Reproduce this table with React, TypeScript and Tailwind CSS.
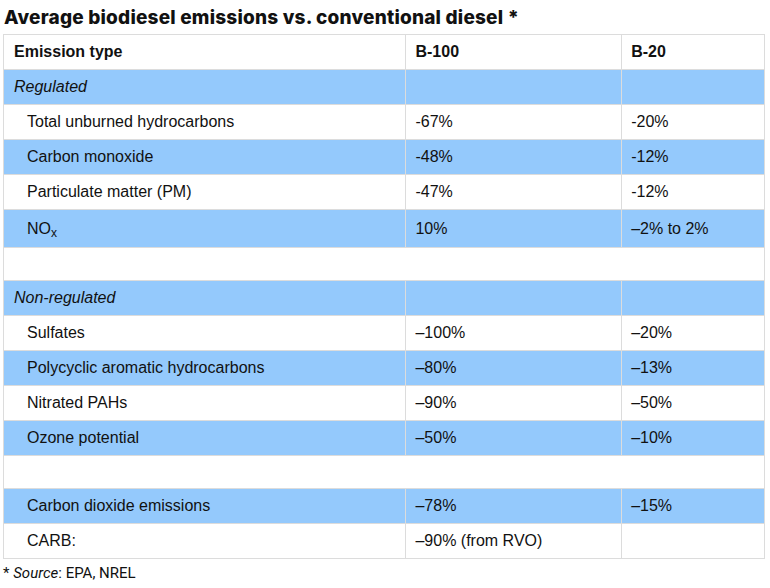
const ROWS: { label: React.ReactNode; b100?: string; b20?: string; kind: 'group' | 'item' | 'spacer'; blue?: boolean; tall?: boolean }[] = [
  { label: 'Regulated', kind: 'group', blue: true },
  { label: 'Total unburned hydrocarbons', b100: '-67%', b20: '-20%', kind: 'item' },
  { label: 'Carbon monoxide', b100: '-48%', b20: '-12%', kind: 'item', blue: true },
  { label: 'Particulate matter (PM)', b100: '-47%', b20: '-12%', kind: 'item' },
  {
    label: (
      <>
        NO<sub className="text-[12px]">x</sub>
      </>
    ),
    b100: '10%',
    b20: '–2% to 2%',
    kind: 'item',
    blue: true,
    tall: true,
  },
  { label: '', kind: 'spacer' },
  { label: 'Non-regulated', kind: 'group', blue: true },
  { label: 'Sulfates', b100: '–100%', b20: '–20%', kind: 'item' },
  { label: 'Polycyclic aromatic hydrocarbons', b100: '–80%', b20: '–13%', kind: 'item', blue: true },
  { label: 'Nitrated PAHs', b100: '–90%', b20: '–50%', kind: 'item' },
  { label: 'Ozone potential', b100: '–50%', b20: '–10%', kind: 'item', blue: true },
  { label: '', kind: 'spacer' },
  { label: 'Carbon dioxide emissions', b100: '–78%', b20: '–15%', kind: 'item', blue: true },
  { label: 'CARB:', b100: '–90% (from RVO)', b20: '', kind: 'item' },
]

export default function App() {
  return (
    <div className="w-[770px] h-[588px] bg-white px-[3px] pt-[5px]">
      <h1 className="text-[19px] leading-[25px] font-extrabold text-[#111] tracking-[0.2px] pl-[1px] [font-family:Inter,sans-serif]">
        Average biodiesel emissions vs. conventional diesel *
      </h1>
      <table className="mt-[4px] w-[762px] border-collapse text-[16px] leading-[20px] text-[#111] [font-family:'Liberation_Sans',Arial,sans-serif]">
        <colgroup>
          <col className="w-[403px]" />
          <col className="w-[216px]" />
          <col className="w-[143px]" />
        </colgroup>
        <thead>
          <tr className="h-[35px]">
            <th className="border border-[#dcdcdc] text-left font-bold pl-[10px]">Emission type</th>
            <th className="border border-[#dcdcdc] text-left font-bold pl-[9px]">B-100</th>
            <th className="border border-[#dcdcdc] text-left font-bold pl-[9px]">B-20</th>
          </tr>
        </thead>
        <tbody>
          {ROWS.map((r, i) =>
            r.kind === 'spacer' ? (
              <tr key={i} className="h-[33px]">
                <td colSpan={3} className="border border-[#dcdcdc]" />
              </tr>
            ) : (
              <tr key={i} className={(r.blue ? 'bg-[#94c9fc] ' : 'bg-white ') + (r.tall ? 'h-[38px]' : 'h-[35px]')}>
                <td
                  className={
                    r.kind === 'group'
                      ? 'border border-[#dcdcdc] italic pl-[10px]'
                      : 'border border-[#dcdcdc] pl-[23px]'
                  }
                >
                  {r.label}
                </td>
                <td className="border border-[#dcdcdc] pl-[9px]">{r.b100}</td>
                <td className="border border-[#dcdcdc] pl-[9px]">{r.b20}</td>
              </tr>
            ),
          )}
        </tbody>
      </table>
      <p className="mt-[4px] text-[15px] leading-[20px] text-[#111] [font-family:Roboto,sans-serif]">
        * <span className="italic">Source</span>: EPA, NREL
      </p>
    </div>
  )
}
